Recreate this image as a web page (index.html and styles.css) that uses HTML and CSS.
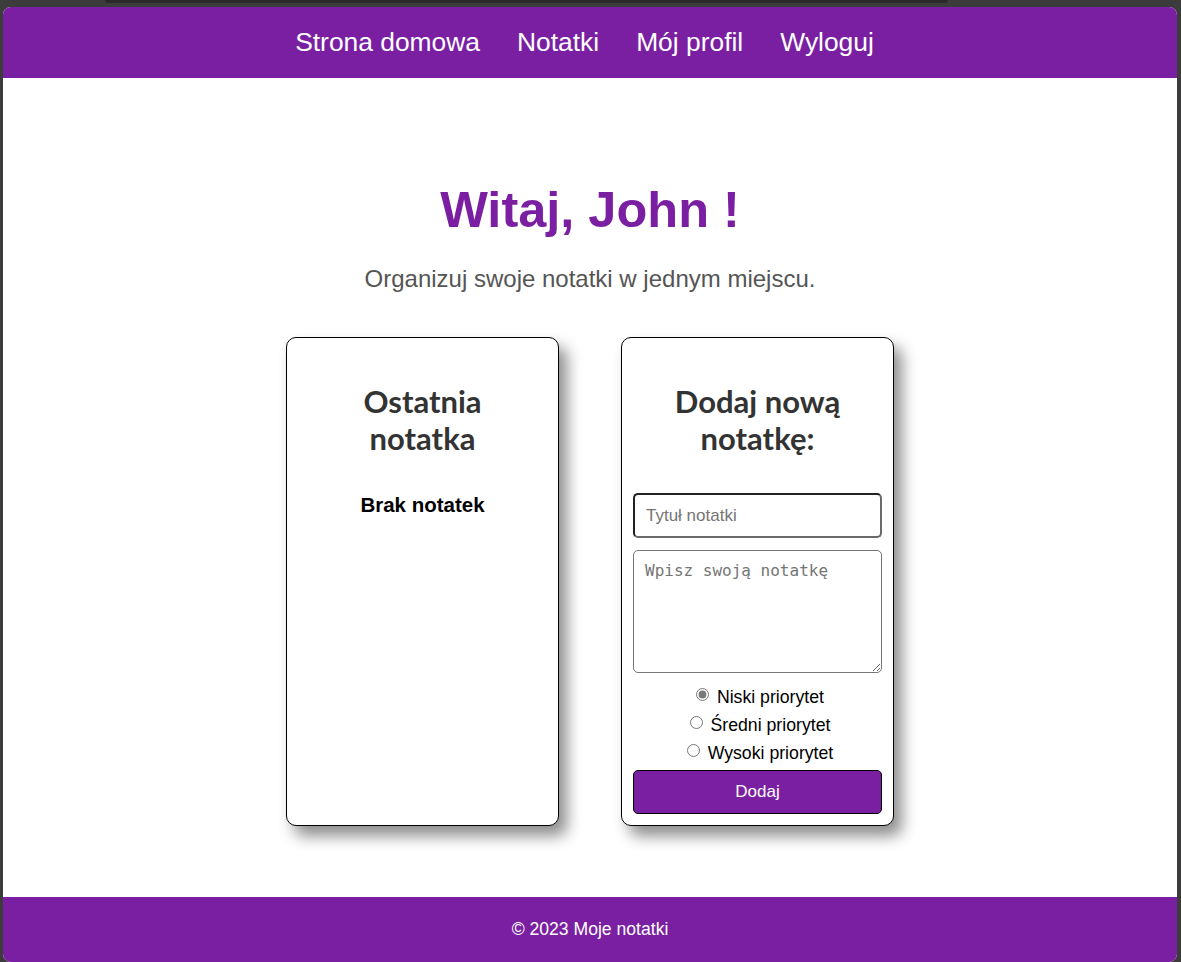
FILE: index.html
```html
<!DOCTYPE html>
<html lang="pl">
<head>
<meta charset="utf-8">
<title>Moje notatki</title>
<link rel="stylesheet" href="styles.css">
</head>
<body>
<div class="topstrip"><div class="tab"></div></div>
<div class="page">
  <nav class="nav">
    <a href="#">Strona domowa</a>
    <a href="#">Notatki</a>
    <a href="#">Mój profil</a>
    <a href="#">Wyloguj</a>
  </nav>
  <main class="main">
    <h1 class="title">Witaj, John !</h1>
    <p class="subtitle">Organizuj swoje notatki w jednym miejscu.</p>
    <div class="cards">
      <section class="card">
        <h2 class="card-title">Ostatnia notatka</h2>
        <p class="empty">Brak notatek</p>
      </section>
      <section class="card">
        <h2 class="card-title">Dodaj nową notatkę:</h2>
        <form class="form">
          <input class="field" type="text" placeholder="Tytuł notatki">
          <textarea class="area" placeholder="Wpisz swoją notatkę"></textarea>
          <div class="radios">
            <label class="radio"><input type="radio" name="p" checked> Niski priorytet</label>
            <label class="radio"><input type="radio" name="p"> Średni priorytet</label>
            <label class="radio"><input type="radio" name="p"> Wysoki priorytet</label>
          </div>
          <button class="btn" type="button">Dodaj</button>
        </form>
      </section>
    </div>
  </main>
  <footer class="footer">© 2023 Moje notatki</footer>
</div>
</body>
</html>
```
FILE: styles.css
```css
* { box-sizing: border-box; }
html, body { margin: 0; padding: 0; }
body {
  background: #3c3c3c;
  font-family: "Liberation Sans", Arial, sans-serif;
  height: 962px;
  overflow: hidden;
}
.topstrip { height: 7px; }
.tab {
  margin-left: 105px;
  width: 843px;
  height: 3px;
  background: #2a2a2a;
  border-radius: 0 0 8px 8px;
}
.page {
  margin: 0 4px 0 3px;
  background: #fff;
  border-radius: 8px;
  overflow: hidden;
  height: 955px;
  display: flex;
  flex-direction: column;
}
.nav {
  height: 71px;
  background: #7b1fa2;
  display: flex;
  justify-content: center;
  align-items: center;
  gap: 37px;
  padding: 0 11px 1px 0;
}
.nav a {
  color: #fff;
  text-decoration: none;
  font-size: 26.4px;
}
.main {
  flex: 1;
  padding-top: 103px;
  text-align: center;
}
.title {
  margin: 0;
  font-size: 50.5px;
  font-weight: bold;
  color: #7b1fa2;
  line-height: 58px;
}
.subtitle {
  margin: 26px 0 45px;
  font-size: 24px;
  color: #555;
  line-height: 27px;
}
.cards {
  display: flex;
  justify-content: center;
  gap: 62px;
}
.card {
  width: 273px;
  border: 1px solid #000;
  border-radius: 10px;
  background: #fff;
  padding: 20px 11px 11px;
  box-shadow: 8px 10px 15px rgba(0, 0, 0, 0.45);
}
.card-title {
  margin: 25px 0 36px;
  font-family: Lato, "Liberation Sans", sans-serif;
  font-weight: bold;
  font-size: 31px;
  line-height: 37px;
  color: #333;
  padding: 0 30px;
}
.empty {
  margin: 0;
  font-size: 20.5px;
  font-weight: bold;
  line-height: 23px;
  color: #000;
}
.form {
  display: flex;
  flex-direction: column;
}
.field {
  height: 45px;
  width: 100%;
  border: 2px solid;
  border-color: #222 #6a6a6a #6a6a6a #222;
  border-radius: 5px;
  padding: 0 11px;
  font-family: "Liberation Sans", Arial, sans-serif;
  font-size: 17px;
  margin: 0 0 12px;
}
.field::placeholder { color: #757575; }
.area {
  height: 123px;
  width: 100%;
  border: 1px solid #767676;
  border-radius: 5px;
  padding: 10px 11px;
  font-family: "DejaVu Sans Mono", monospace;
  font-size: 16px;
  resize: vertical;
  margin: 0 0 10px;
  display: block;
}
.area::placeholder { color: #757575; }
.radios {
  display: flex;
  flex-direction: column;
  align-items: center;
}
.radio {
  font-size: 17.7px;
  line-height: 28px;
  height: 28px;
  color: #000;
}
.radio input {
  margin: 0 3px 0 5px;
  width: 13px;
  height: 13px;
  accent-color: #7a7a7a;
  vertical-align: 2px;
}
.btn {
  margin-top: 3px;
  height: 44px;
  width: 100%;
  background: #7b1fa2;
  border: 1px solid #000;
  border-radius: 5px;
  color: #fff;
  font-family: "Liberation Sans", Arial, sans-serif;
  font-size: 17px;
}
.footer {
  height: 65px;
  background: #7b1fa2;
  color: #fff;
  font-size: 17.6px;
  display: flex;
  justify-content: center;
  align-items: center;
}
```
